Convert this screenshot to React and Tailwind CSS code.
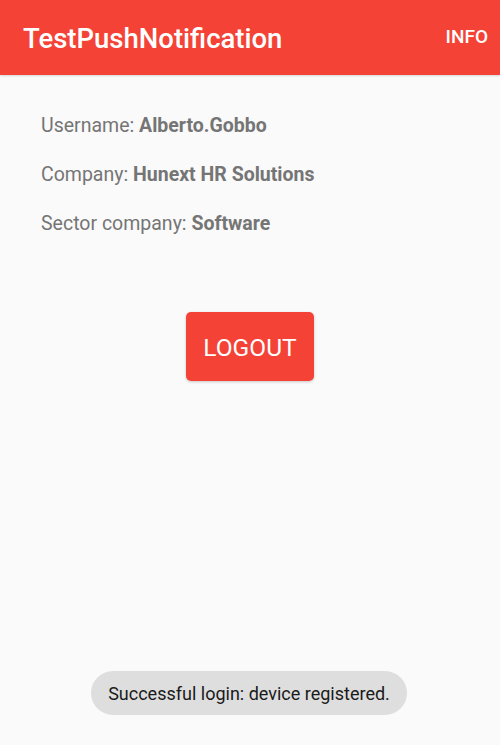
export default function App() {
  const rows = [
    { label: "Username:", value: "Alberto.Gobbo" },
    { label: "Company:", value: "Hunext HR Solutions" },
    { label: "Sector company:", value: "Software" },
  ];

  return (
    <div
      className="relative flex h-[745px] w-[500px] flex-col bg-[#fafafa]"
      style={{ fontFamily: "Roboto, 'Noto Sans', sans-serif" }}
    >
      {/* Toolbar */}
      <div className="flex h-[75px] shrink-0 items-center justify-between bg-[#f44336] pl-[23px] pr-[12px] shadow-[0_1px_2px_rgba(0,0,0,0.15)]">
        <h1 className="pt-[2px] text-[27.5px] font-medium text-white">TestPushNotification</h1>
        <span className="text-[19px] font-medium text-white">INFO</span>
      </div>

      {/* Info */}
      <div className="flex flex-col gap-[27px] px-[41px] pt-[40px]">
        {rows.map((r) => (
          <p key={r.label} className="text-[19.5px] leading-[22px] text-[#757575]">
            {r.label} <span className="font-bold">{r.value}</span>
          </p>
        ))}
      </div>

      {/* Logout */}
      <div className="flex justify-center pt-[77px]">
        <button className="h-[69px] w-[128px] rounded-[5px] bg-[#f44336] pt-[3px] text-[24.5px] text-white shadow-[0_1px_3px_rgba(0,0,0,0.2)]">
          LOGOUT
        </button>
      </div>

      {/* Toast */}
      <div className="absolute left-[91px] top-[671px] flex h-[44px] w-[316px] items-center justify-center rounded-full bg-[#dedede]">
        <span className="text-[18px] text-[#1a1a1a]">Successful login: device registered.</span>
      </div>
    </div>
  );
}
